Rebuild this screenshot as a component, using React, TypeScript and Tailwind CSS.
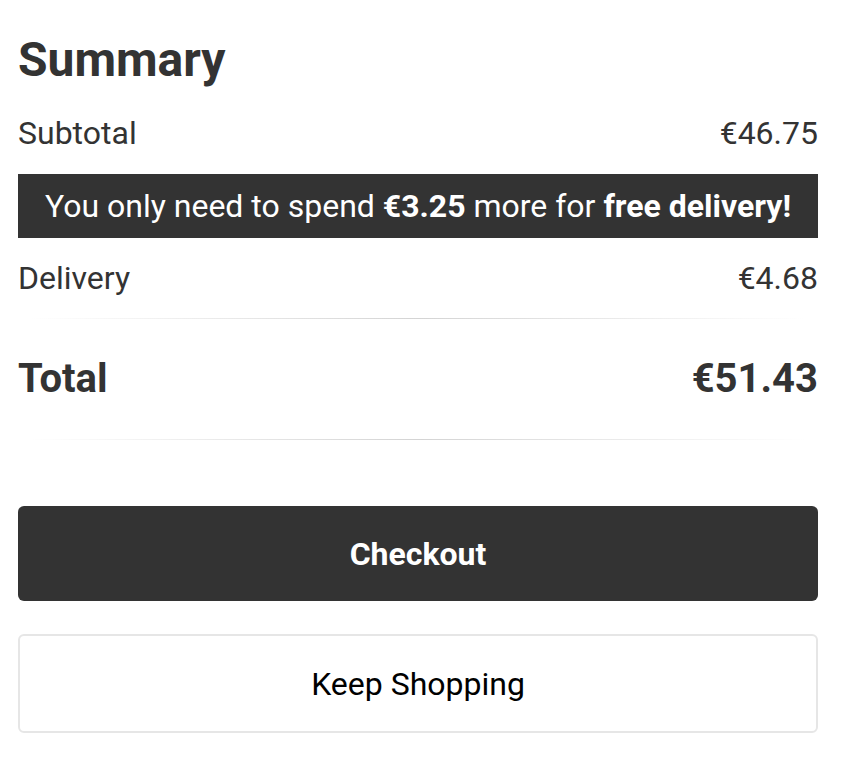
import React from 'react';

const Row = ({ label, value }: { label: string; value: string }) => (
  <div className="flex h-[48px] items-center justify-between text-[32px] text-[#333]">
    <span>{label}</span>
    <span>{value}</span>
  </div>
);

const Divider = () => (
  <div className="h-px w-full bg-gradient-to-r from-transparent via-[#d4d4d4] to-transparent" />
);

export default function App() {
  return (
    <div className="min-h-screen bg-white font-['Roboto',sans-serif]">
      <div className="w-[800px] ml-[18px] pt-[31px]">
        <h1 className="h-[58px] leading-[58px] text-[48px] font-bold text-[#333]">Summary</h1>

        <div className="mt-[20px]">
          <Row label="Subtotal" value="€46.75" />
        </div>

        <div className="mt-[17px] flex h-[64px] items-center justify-center bg-[#333] text-[32px] text-white">
          <span>
            You only need to spend <strong className="font-bold">€3.25</strong> more for{' '}
            <strong className="font-bold">free delivery!</strong>
          </span>
        </div>

        <div className="mt-[16px]">
          <Row label="Delivery" value="€4.68" />
        </div>

        <div className="mt-[16px] px-[12px]">
          <Divider />
        </div>

        <div className="mt-[32px] flex h-[56px] items-center justify-between text-[40px] font-bold text-[#333]">
          <span>Total</span>
          <span>€51.43</span>
        </div>

        <div className="mt-[32px] px-[12px]">
          <Divider />
        </div>

        <button className="mt-[66px] flex h-[95px] w-full items-center justify-center rounded-[6px] bg-[#333] text-[32px] font-bold text-white">
          Checkout
        </button>

        <button className="mt-[33px] flex h-[99px] w-full items-center justify-center rounded-[6px] border-2 border-[#e6e6e6] bg-white text-[32px] text-black">
          Keep Shopping
        </button>
      </div>
    </div>
  );
}
